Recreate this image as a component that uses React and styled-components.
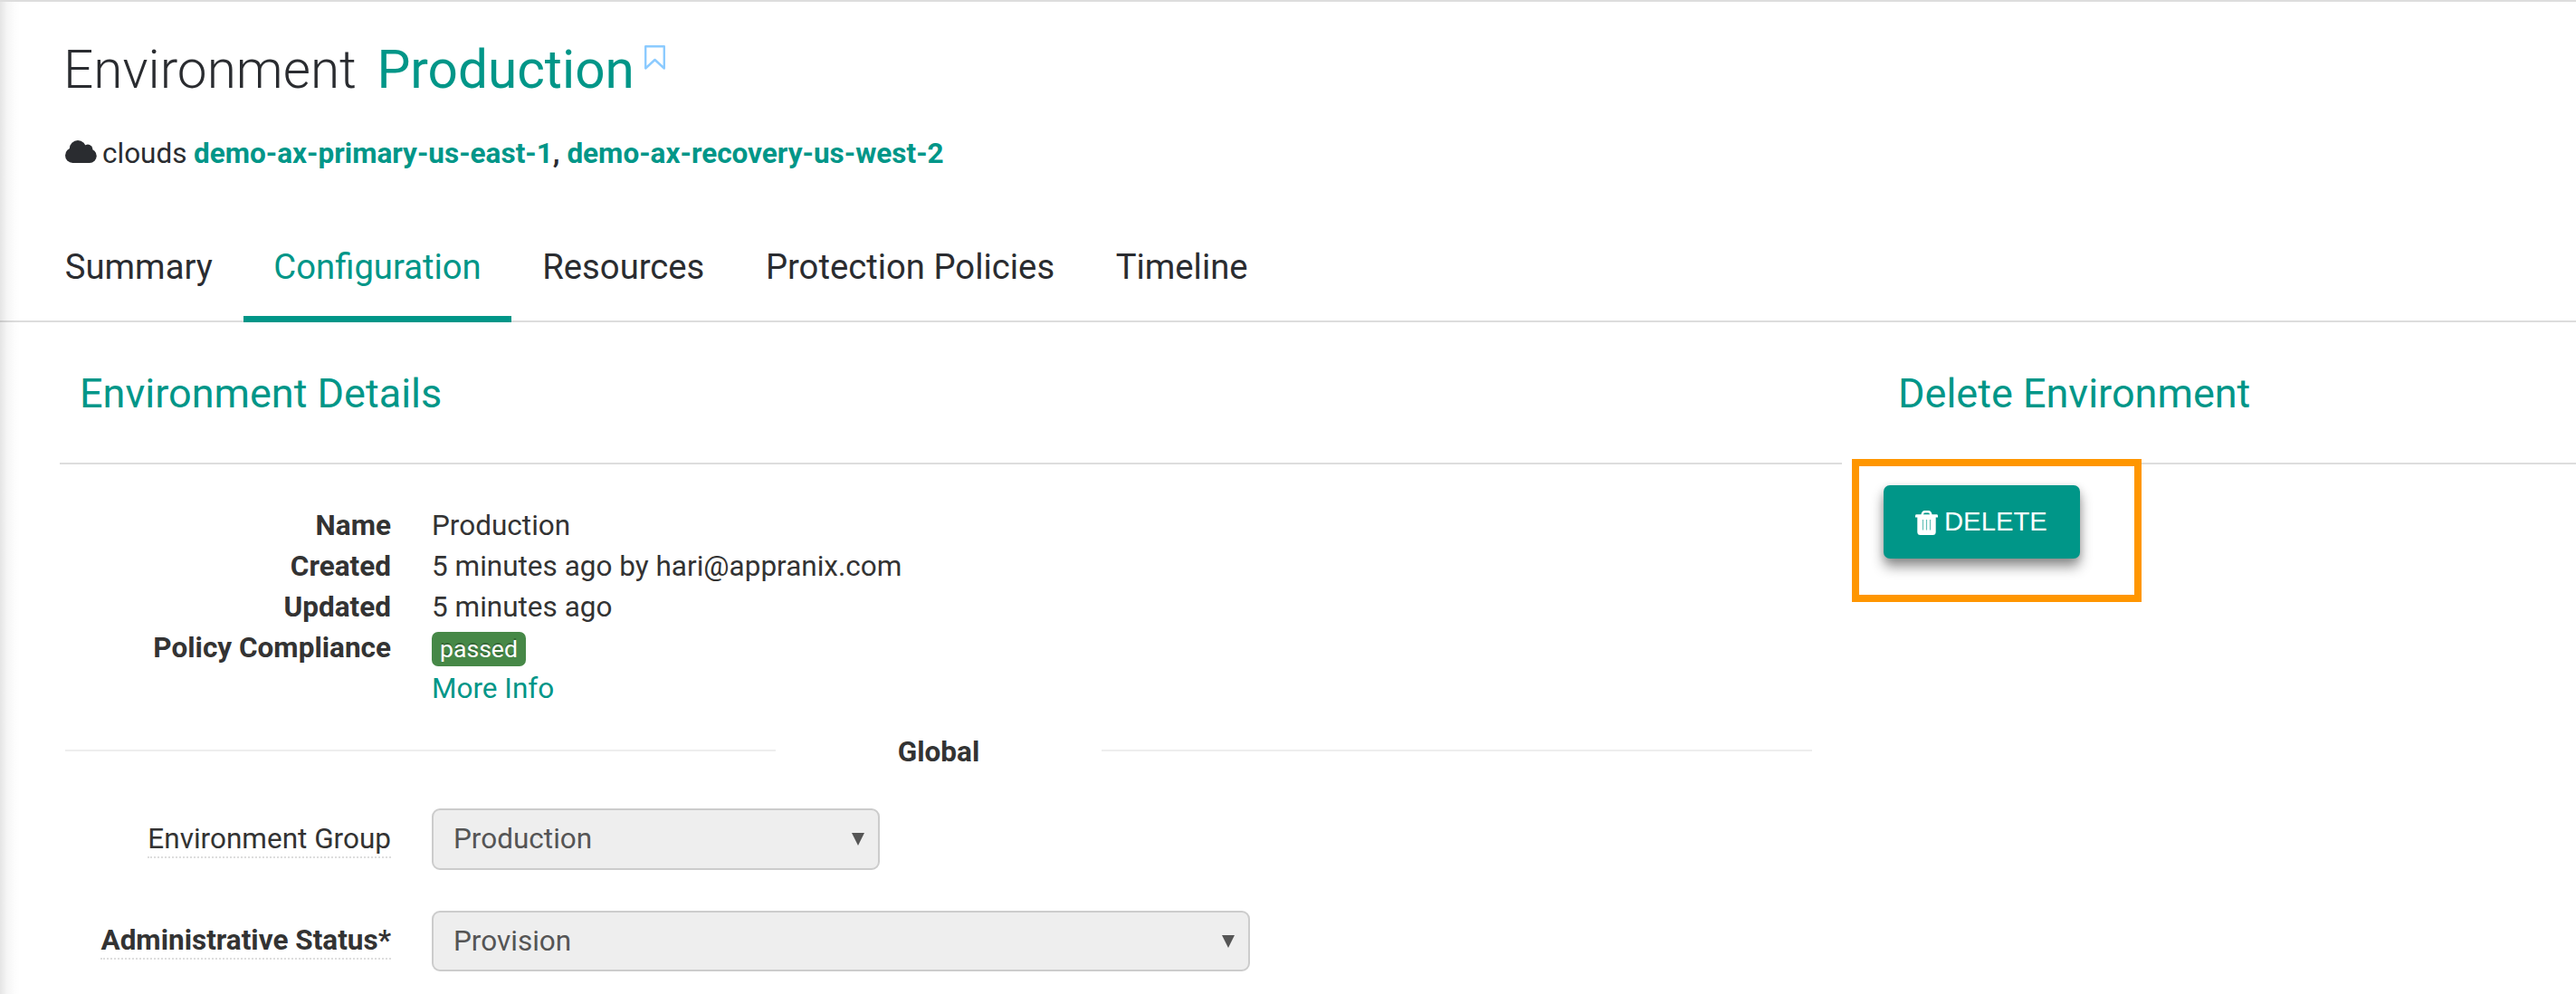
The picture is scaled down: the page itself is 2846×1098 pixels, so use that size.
import React from 'react';
import styled, { createGlobalStyle } from 'styled-components';

const teal = '#009688';

const GlobalStyle = createGlobalStyle`
  *, *::before, *::after { box-sizing: border-box; }
  body {
    margin: 0;
    background: #fff;
    color: #333;
    font-family: Roboto, "Liberation Sans", sans-serif;
    font-size: 31.5px;
    line-height: 45px;
    overflow: hidden;
  }
`;

const Page = styled.div`
  position: relative;
  width: 2846px;
  height: 1098px;
  overflow: hidden;
  border-top: 2px solid #ddd;
  background: #fff;
`;

const EdgeShadow = styled.div`
  position: absolute;
  left: 0;
  top: 0;
  bottom: 0;
  width: 22px;
  background: linear-gradient(to right, rgba(0,0,0,.1), rgba(0,0,0,.04) 35%, rgba(0,0,0,.01) 70%, transparent);
`;

const Header = styled.header`
  height: 248px;
  padding: 40px 72px 0 70px;
  color: #2a2c30;
`;

const Title = styled.h1`
  display: flex;
  margin: 0;
  font-size: 58.5px;
  line-height: 70px;
  font-weight: 300;
`;

const TitleName = styled.span`
  margin-left: 22.5px;
  color: ${teal};
  font-weight: 400;
`;

const BookmarkIcon = styled.svg`
  width: 23px;
  height: 27px;
  margin: 8px 0 0 11px;
`;

const Clouds = styled.div`
  display: flex;
  align-items: flex-start;
  margin: 35px 0 0 2px;
  height: 45px;
`;

const CloudIcon = styled.svg`
  width: 35px;
  height: 25px;
  margin: 8px 6px 0 0;
`;

const CloudLinks = styled.span`
  margin-left: 7.5px;
  font-weight: 700;
`;

const Link = styled.a`
  color: ${teal};
`;

const Tabs = styled.nav`
  display: flex;
  height: 106px;
  padding-left: 38px;
  border-bottom: 2px solid #ddd;
  color: #2a2c30;
`;

const Tab = styled.a`
  height: 106px;
  padding: 23px 33.75px 0;
  font-size: 38.25px;
  line-height: 45px;
  color: ${p => (p.$active ? teal : 'inherit')};
  border-bottom: 7px solid ${p => (p.$active ? teal : 'transparent')};
`;

const Columns = styled.main`
  display: flex;
  gap: 40px;
  padding-left: 66px;
`;

const Details = styled.section`
  width: 1969px;
`;

const Removal = styled.section`
  flex: 1;
`;

const SectionTitle = styled.h2`
  height: 157px;
  margin: 0;
  padding: 52px 22px 0;
  border-bottom: 2px solid #ddd;
  color: ${teal};
  font-size: 45px;
  line-height: 54px;
  font-weight: 400;
`;

const Facts = styled.dl`
  display: grid;
  grid-template-columns: 366px 1fr;
  column-gap: 45px;
  grid-auto-rows: 45px;
  margin: 45px 0 0;
`;

const Term = styled.dt`
  text-align: right;
  font-weight: 700;
`;

const Value = styled.dd`
  margin: 0;
`;

const Badge = styled.span`
  display: block;
  width: 104px;
  height: 38px;
  margin-top: 5px;
  border-radius: 7px;
  background: #468847;
  color: #fff;
  font-size: 26.6px;
  line-height: 38px;
  text-align: center;
  text-shadow: 0 -2px 0 rgba(0,0,0,.25);
`;

const Divider = styled.div`
  display: flex;
  align-items: center;
  height: 45px;
  margin: 24px 33px 0 6px;
`;

const Rule = styled.span`
  flex: 1;
  height: 2px;
  margin-bottom: 1px;
  background: #eee;
`;

const DividerLabel = styled.strong`
  width: 360px;
  padding-top: 1px;
  text-align: center;
`;

const Field = styled.div`
  display: flex;
  align-items: flex-start;
  gap: 45px;
  margin-top: ${p => p.$top}px;
`;

const LabelBox = styled.div`
  width: 366px;
  padding-top: ${p => p.$drop}px;
  text-align: right;
`;

const Label = styled.label`
  display: inline-block;
  height: 44px;
  border-bottom: 2px dotted #ddd;
  font-weight: ${p => (p.$required ? 700 : 400)};
`;

const Select = styled.div`
  display: flex;
  align-items: center;
  justify-content: space-between;
  width: ${p => p.$width}px;
  height: ${p => p.$height}px;
  padding: 0 15px 0 22px;
  border: 2px solid #ccc;
  border-radius: 9px;
  background: #eee;
  color: #555;
`;

const Choice = styled.span`
  padding-bottom: 1px;
`;

const Arrow = styled.span`
  border-style: solid;
  border-color: #555 transparent transparent;
  border-width: 14px 7px 0;
`;

const DeleteButton = styled.button`
  display: flex;
  align-items: center;
  width: 217px;
  height: 81px;
  margin: 23px 0 0 6px;
  padding: 0 0 1px 35px;
  border: 0;
  border-radius: 7px;
  background: ${teal};
  color: #fff;
  font: 400 29.25px/40px "Liberation Sans", Arial, sans-serif;
  box-shadow: 0 9px 14px rgba(0,0,0,.42), 0 2px 8px rgba(0,0,0,.12);
`;

const TrashIcon = styled.svg`
  width: 25px;
  height: 27px;
  margin: 2px 7px 0 0;
`;

const Highlight = styled.div`
  position: absolute;
  left: 2046px;
  top: 505px;
  width: 320px;
  height: 158px;
  border: 8px solid #ff9600;
  pointer-events: none;
`;

const facts = [
  ['Name', 'Production'],
  ['Created', '5 minutes ago by hari@appranix.com'],
  ['Updated', '5 minutes ago'],
  ['Policy Compliance', <Badge key="b">passed</Badge>],
  ['', <Link key="l">More Info</Link>],
];

const tabs = ['Summary', 'Configuration', 'Resources', 'Protection Policies', 'Timeline'];

export default function App() {
  return (
    <Page>
      <GlobalStyle />
      <Header>
        <Title>
          Environment
          <TitleName>Production</TitleName>
          <BookmarkIcon viewBox="0 0 23 27" fill="none" stroke="#8ccbff" strokeWidth="2.4" strokeLinejoin="round">
            <path d="M1.2 1.2H21.8V25.5L11.5 16L1.2 25.5Z" />
          </BookmarkIcon>
        </Title>
        <Clouds>
          <CloudIcon viewBox="0 0 35 25" fill="#2a2c30">
            <circle cx="14" cy="9.2" r="9.2" />
            <circle cx="25" cy="10" r="5.4" />
            <circle cx="8.3" cy="16.7" r="8.3" />
            <circle cx="27" cy="17.3" r="7.7" />
            <path d="M8 12H27V25H8Z" />
          </CloudIcon>
          clouds
          <CloudLinks>
            <Link>demo-ax-primary-us-east-1</Link>, <Link>demo-ax-recovery-us-west-2</Link>
          </CloudLinks>
        </Clouds>
      </Header>
      <Tabs>
        {tabs.map(name => (
          <Tab key={name} $active={name === 'Configuration'}>{name}</Tab>
        ))}
      </Tabs>
      <Columns>
        <Details>
          <SectionTitle>Environment Details</SectionTitle>
          <Facts>
            {facts.map(([term, value], i) => (
              <React.Fragment key={i}>
                <Term>{term}</Term>
                <Value>{value}</Value>
              </React.Fragment>
            ))}
          </Facts>
          <Divider>
            <Rule />
            <DividerLabel>Global</DividerLabel>
            <Rule />
          </Divider>
          <Field $top={41}>
            <LabelBox $drop={11}><Label>Environment Group</Label></LabelBox>
            <Select $width={495} $height={68}><Choice>Production</Choice><Arrow /></Select>
          </Field>
          <Field $top={45}>
            <LabelBox $drop={10}><Label $required>Administrative Status*</Label></LabelBox>
            <Select $width={904} $height={67}><Choice>Provision</Choice><Arrow /></Select>
          </Field>
        </Details>
        <Removal>
          <SectionTitle>Delete Environment</SectionTitle>
          <DeleteButton>
            <TrashIcon viewBox="0 0 25 27">
              <path d="M7.5 5C8 2 9 1.3 10.5 1.3H14.5C16 1.3 17 2 17.5 5" fill="none" stroke="#fff" strokeWidth="2.4" />
              <path d="M1 4.3H24Q25 4.3 25 5.8V7.6H0V5.8Q0 4.3 1 4.3Z" fill="#fff" />
              <path d="M2.3 7H22.7V23.5Q22.7 27 19.5 27H5.5Q2.3 27 2.3 23.5Z" fill="#fff" />
              <path d="M8.5 10V21.5M12.5 10V21.5M16.5 10V21.5" stroke="#66c0b8" strokeWidth="1.2" />
            </TrashIcon>
            DELETE
          </DeleteButton>
        </Removal>
      </Columns>
      <Highlight />
      <EdgeShadow />
    </Page>
  );
}
